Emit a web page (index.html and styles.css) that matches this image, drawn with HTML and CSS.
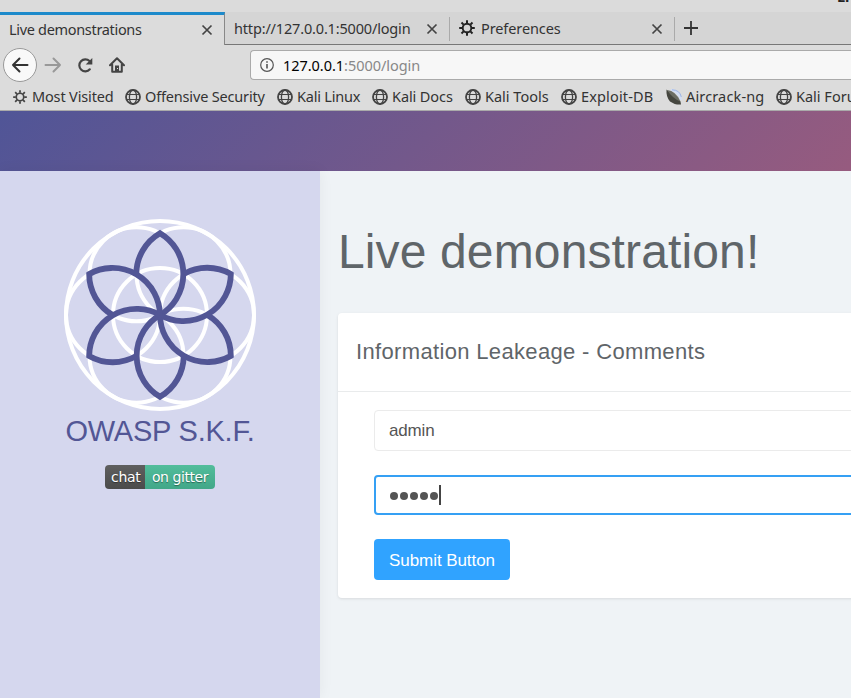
FILE: index.html
```html
<!DOCTYPE html>
<html lang="en">
<head>
<meta charset="utf-8">
<title>Live demonstrations</title>
<link rel="stylesheet" href="styles.css">
</head>
<body>
<svg class="defs" width="0" height="0" aria-hidden="true">
  <symbol id="globe" viewBox="0 0 16 16"><g fill="none" stroke="#444"><circle cx="8" cy="8" r="7" stroke-width="1.8"/><ellipse cx="8" cy="8" rx="3.6" ry="7" stroke-width="1.3"/><path d="M1.5 5.5h13M1.5 10.5h13" stroke-width="1.2"/></g></symbol>
  <symbol id="gear" viewBox="0 0 16 16"><g fill="none" stroke="currentColor"><circle cx="8" cy="8" r="4.3" stroke-width="1.9"/><path d="M8 .2v3M8 12.8v3M.2 8h3M12.8 8h3M2.5 2.5l2.1 2.1M11.4 11.4l2.1 2.1M2.5 13.5l2.1-2.1M11.4 4.6l2.1-2.1" stroke-width="2"/></g></symbol>
  <symbol id="close" viewBox="0 0 12 12"><path d="M1.5 1.5l9 9M10.5 1.5l-9 9" fill="none" stroke="#444" stroke-width="1.7"/></symbol>
</svg>
<div class="browser">
  <div class="titlebar"><span>Live demonstrations</span></div>
  <div class="tabs">
    <div class="tab active"><span class="label t1">Live demonstrations</span><svg class="x"><use href="#close"/></svg></div>
    <div class="tab second"><span class="label t2">http://127.0.0.1:5000/login</span><svg class="x"><use href="#close"/></svg></div>
    <div class="tab"><svg class="icon dark"><use href="#gear"/></svg><span class="label t3">Preferences</span><svg class="x"><use href="#close"/></svg></div>
    <div class="newtab"><svg width="14" height="14" viewBox="0 0 14 14"><path d="M7 0v14M0 7h14" stroke="#333" stroke-width="1.8"/></svg></div>
  </div>
  <div class="nav">
    <div class="back"><svg width="18" height="16" viewBox="0 0 18 16"><path d="M16.5 8H2M8.5 1.5L2 8l6.500 6.500" fill="none" stroke="#333" stroke-width="2" stroke-linecap="round" stroke-linejoin="round"/></svg></div>
    <svg class="forward" width="18" height="16" viewBox="0 0 18 16"><path d="M1.500 8H16M9.500 1.500L16 8l-6.500 6.500" fill="none" stroke="#999" stroke-width="2" stroke-linecap="round" stroke-linejoin="round"/></svg>
    <svg class="reload" width="16" height="16" viewBox="0 0 16 16"><path d="M12.800 12.300A6 6 0 1 1 12.500 4" fill="none" stroke="#444" stroke-width="2.200" stroke-linecap="round"/><path d="M15.300.9v6.600H8.700z" fill="#444"/></svg>
    <svg class="home" width="16" height="16" viewBox="0 0 16 16"><path d="M1 8.300L8 1.300l7 7M3.200 7.500v7.300h9.600V7.500" fill="none" stroke="#444" stroke-width="2" stroke-linecap="round" stroke-linejoin="round"/><path d="M6 8.500h4V15H6z" fill="#444"/><path d="M8 11h1v1H8z" fill="#ddd"/></svg>
    <div class="url"><svg width="14" height="14" viewBox="0 0 14 14"><circle cx="7" cy="7" r="6.300" fill="none" stroke="#555" stroke-width="1.200"/><path d="M7 6v4.500M7 3.300v1.500" stroke="#555" stroke-width="1.600"/></svg><span class="address"><b>127.0.0.1</b>:5000/login</span></div>
  </div>
  <div class="bookmarks">
    <div class="bm b1"><svg class="small"><use href="#gear"/></svg><span>Most Visited</span></div>
    <div class="bm b2"><svg><use href="#globe"/></svg><span>Offensive Security</span></div>
    <div class="bm b3"><svg><use href="#globe"/></svg><span>Kali Linux</span></div>
    <div class="bm b4"><svg><use href="#globe"/></svg><span>Kali Docs</span></div>
    <div class="bm b5"><svg><use href="#globe"/></svg><span>Kali Tools</span></div>
    <div class="bm b6"><svg><use href="#globe"/></svg><span>Exploit-DB</span></div>
    <div class="bm b7"><svg viewBox="0 0 16 16"><path d="M5 1Q13 2 15 11" fill="none" stroke="#d3def5" stroke-width="2.500"/><path d="M6 .8Q14 1 15.300 8" fill="none" stroke="#9db5e6" stroke-width="1"/><path d="M.5.5Q0 8 4 12.500Q8 15 11 15.500H15L14.500 12.500Z" fill="#45463f"/><path d="M1 1Q10 2 14.500 12.500Q7 10 1 1Z" fill="#6b6d64"/></svg><span>Aircrack-ng</span></div>
    <div class="bm b8"><svg><use href="#globe"/></svg><span>Kali Forums</span></div>
  </div>
</div>
<header class="banner"></header>
<div class="page">
  <aside class="sidebar">
    <svg class="logo" width="192" height="192" viewBox="-96 -96 192 192">
      <g fill="none" stroke="#fff" stroke-width="4">
        <circle r="94"/><circle r="47"/>
        <circle cx="47" r="47"/><circle cx="23.500" cy="40.700" r="47"/><circle cx="-23.500" cy="40.700" r="47"/>
        <circle cx="-47" r="47"/><circle cx="-23.500" cy="-40.700" r="47"/><circle cx="23.500" cy="-40.700" r="47"/>
      </g>
      <g fill="none" stroke="#525695" stroke-width="5.800">
        <path id="petal" d="M0 0A47.500 47.500 0 0 0 0-81.800A47.500 47.500 0 0 0-23.700-41"/>
        <use href="#petal" transform="rotate(60)"/><use href="#petal" transform="rotate(120)"/><use href="#petal" transform="rotate(180)"/><use href="#petal" transform="rotate(240)"/><use href="#petal" transform="rotate(300)"/>
      </g>
    </svg>
    <div class="brand">OWASP S.K.F.</div>
    <div class="badge"><span class="chat">chat</span><span class="gitter">on gitter</span></div>
  </aside>
  <main class="content">
    <h1>Live demonstration!</h1>
    <section class="card">
      <h2>Information Leakeage - Comments</h2>
      <form class="form">
        <div class="field">admin</div>
        <div class="field focused"><i></i><i></i><i></i><i></i><i></i><span class="caret"></span></div>
        <button type="button">Submit Button</button>
      </form>
    </section>
  </main>
</div>
</body>
</html>
```
FILE: styles.css
```css
* { box-sizing: border-box; }
html, body { margin: 0; height: 100%; overflow: hidden; }
body { font-family: "Liberation Sans", sans-serif; background: #eff3f6; }
.defs { position: absolute; }
svg { display: block; flex: none; }
.browser { height: 111px; background: #dcdcdc; border-bottom: 1px solid #aaa; font: 14.500px "Noto Sans", sans-serif; color: #333; overflow: hidden; white-space: nowrap; }
.titlebar { height: 12px; background: #dbdbdb; overflow: hidden; padding-left: 837px; font-weight: bold; line-height: 12px; }
.titlebar span { display: block; margin-top: -10px; color: #222; }
.tabs { height: 33px; display: flex; background: #d5d5d5; }
.tab { width: 225px; height: 33px; display: flex; align-items: center; padding: 0 12px 0 9px; border-bottom: 1px solid #777; position: relative; }
.tab.active { background: #dcdcdc; border-top: 3px solid #1d8acb; border-right: 1px solid #888; border-bottom: 0; padding-right: 11px; padding-bottom: 3px; }
.tab:not(.active)::after { content: ""; position: absolute; right: 0; top: 5px; width: 1px; height: 24px; background: #aaa; }
.label { line-height: 20px; }
.t1 { letter-spacing: -.32px; }
.t2 { letter-spacing: -.17px; }
.t3 { letter-spacing: -.1px; }
.x { width: 12px; height: 12px; margin-left: auto; position: relative; top: 1px; }
.icon { width: 16px; height: 16px; margin-right: 6px; }
.dark { color: #222; }
.newtab { flex: 1; padding: 9px; border-bottom: 1px solid #777; }
.nav { height: 40px; display: flex; align-items: center; padding-left: 3px; }
.back { width: 34px; height: 34px; border: 1px solid #999; border-radius: 50%; background: #f9f9f9; display: flex; align-items: center; justify-content: center; }
.forward { margin-left: 7px; }
.reload { margin-left: 15px; }
.home { margin-left: 16px; }
.url { height: 30px; margin-left: 125px; flex: 1; border: 1px solid #aaa; border-right: 0; border-radius: 4px 0 0 4px; background: #f7f7f7; display: flex; align-items: center; padding-left: 9px; color: #888; }
.address { margin-left: 9px; letter-spacing: -.04px; }
.address b { font-weight: 400; color: #000; }
.bookmarks { display: flex; height: 25px; padding-left: 12px; }
.bm { display: flex; align-items: center; flex: none; gap: 4px; height: 24px; }
.bm span { margin-top: -2px; }
.bm svg { width: 16px; height: 16px; color: #444; }
.bm .small { width: 14px; height: 14px; margin: 0 1px; }
.b1 { width: 113px; letter-spacing: -.15px; } .b2 { width: 152px; letter-spacing: -.17px; } .b3 { width: 95px; letter-spacing: -.2px; } .b4 { width: 93px; letter-spacing: -.1px; }
.b5 { width: 96px; } .b6 { width: 105px; letter-spacing: .15px; } .b7 { width: 110px; letter-spacing: .15px; } .b8 { width: 110px; }
.banner { height: 60px; background: linear-gradient(135deg, #505597 0, #965b7f 640px); }
.page { height: 527px; display: flex; }
.sidebar { width: 320px; flex: none; background: #d5d7ee; display: flex; flex-direction: column; align-items: center; padding-top: 48px; box-shadow: 0 0 14px rgba(0,0,0,.055); }
.brand { font-size: 29px; line-height: 34px; margin-top: 3px; color: #525695; white-space: nowrap; letter-spacing: -.22px; }
.badge { display: flex; width: 110px; height: 24px; margin-top: 17px; border-radius: 4px; overflow: hidden; color: #fff; font: 14px/24px "DejaVu Sans", sans-serif; text-shadow: 0 1px 1px rgba(0,0,0,.4); white-space: nowrap; }
.chat { width: 40px; padding-left: 6px; letter-spacing: -.3px; background: linear-gradient(#5f5f5f, #4b4b4b); }
.gitter { flex: 1; padding-left: 7px; letter-spacing: -.45px; background: linear-gradient(#52bd9b, #42a788); }
.content { flex: 1; padding: 54px 0 0 18px; color: #5f6569; overflow: hidden; }
h1 { margin: 0; font-size: 48px; line-height: 54px; font-weight: 400; white-space: nowrap; letter-spacing: .13px; }
.card { margin-top: 34px; width: 700px; height: 285px; background: #fff; border-radius: 4px; box-shadow: 0 1px 3px rgba(0,0,0,.1); }
h2 { margin: 0; height: 79px; padding-left: 18px; border-bottom: 1px solid #e9ebec; font-size: 22px; line-height: 78px; font-weight: 400; letter-spacing: .34px; white-space: nowrap; }
.form { padding: 18px 36px; }
.field { height: 41px; border: 1px solid #ebebeb; border-radius: 4px; padding-left: 14px; font-size: 17px; line-height: 39px; color: #555; letter-spacing: -.15px; }
.focused { height: 40px; margin-top: 24px; border: 2px solid #35a0f4; padding-left: 14px; display: flex; align-items: center; gap: 2px; }
.focused i { width: 8px; height: 8px; background: #555; border-radius: 50%; margin-top: 2px; }
.caret { width: 2px; height: 20px; background: #444; margin-left: -1px; }
button { display: block; width: 136px; height: 41px; margin-top: 24px; padding: 2px 0 0; border: 0; border-radius: 4px; background: #30a3ff; color: #fff; font: 17px "Liberation Sans", sans-serif; letter-spacing: -.07px; }
```
